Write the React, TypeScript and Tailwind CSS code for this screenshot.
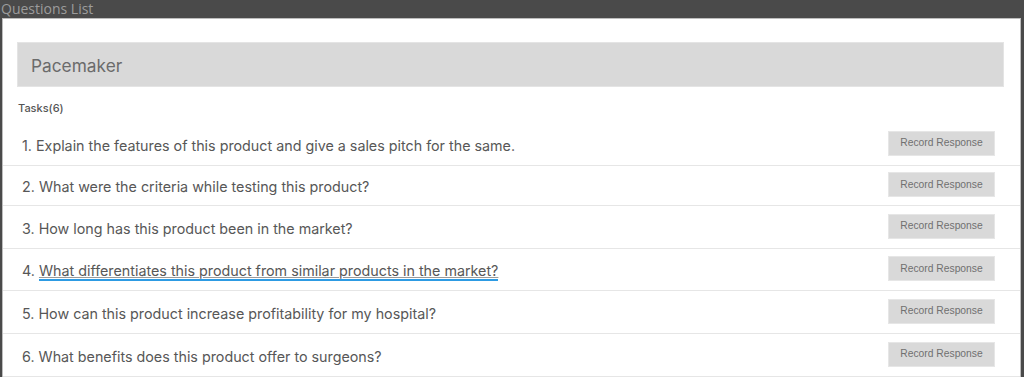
const questions = [
  { text: 'Explain the features of this product and give a sales pitch for the same.', h: 'h-[43px]' },
  { text: 'What were the criteria while testing this product?', h: 'h-[40px]' },
  { text: 'How long has this product been in the market?', h: 'h-[43px]' },
  { text: 'What differentiates this product from similar products in the market?', h: 'h-[42px]', marked: true },
  { text: 'How can this product increase profitability for my hospital?', h: 'h-[43px]' },
  { text: 'What benefits does this product offer to surgeons?', h: 'h-[43px]' },
]

export default function App() {
  return (
    <div className="flex h-[377px] w-[1024px] flex-col overflow-hidden bg-[#4a4a4a] font-['Inter',sans-serif]">
      <div className="h-[18px] shrink-0 pl-[1px] font-['Open_Sans',sans-serif] text-[14px] leading-[18px] text-[#9c9c9c]">
        Questions List
      </div>

      <div className="ml-[2px] mr-[3px] flex flex-1 flex-col border border-b-0 border-[#bdbdbd] bg-white">
        <div className="ml-[14px] mr-[16px] mt-[23px] flex h-[45px] items-center border border-[#e4e4e4] bg-[#d9d9d9] px-[13px] pt-[2px]">
          <span className="text-[17.3px] text-[#6b6b6b]">Pacemaker</span>
        </div>

        <p className="mt-[14px] pl-[15px] text-[11px] font-medium leading-[14px] text-[#555]">Tasks(6)</p>

        <ul className="mt-[8px]">
          {questions.map((q, i) => (
            <li
              key={i}
              className={`flex ${q.h} items-center justify-between border-b border-[#e6e6e6] pl-[19px] pr-[25px]`}
            >
              <span className="pt-[3px] text-[14.3px] leading-[18px] text-[#575757]">
                {i + 1}.{' '}
                {q.marked ? (
                  <span className="inline-block border-b-2 border-[#2d9be3] leading-[17px] underline decoration-[#9a9a9a] underline-offset-[1px]">
                    {q.text}
                  </span>
                ) : (
                  q.text
                )}
              </span>
              <button
                type="button"
                className="mb-[2px] flex h-[25px] w-[107px] items-center justify-center border border-[#e6e6e6] bg-[#d9d9d9] font-['Liberation_Sans',sans-serif] text-[10.3px] text-[#707070]"
              >
                Record Response
              </button>
            </li>
          ))}
        </ul>
      </div>
    </div>
  )
}
